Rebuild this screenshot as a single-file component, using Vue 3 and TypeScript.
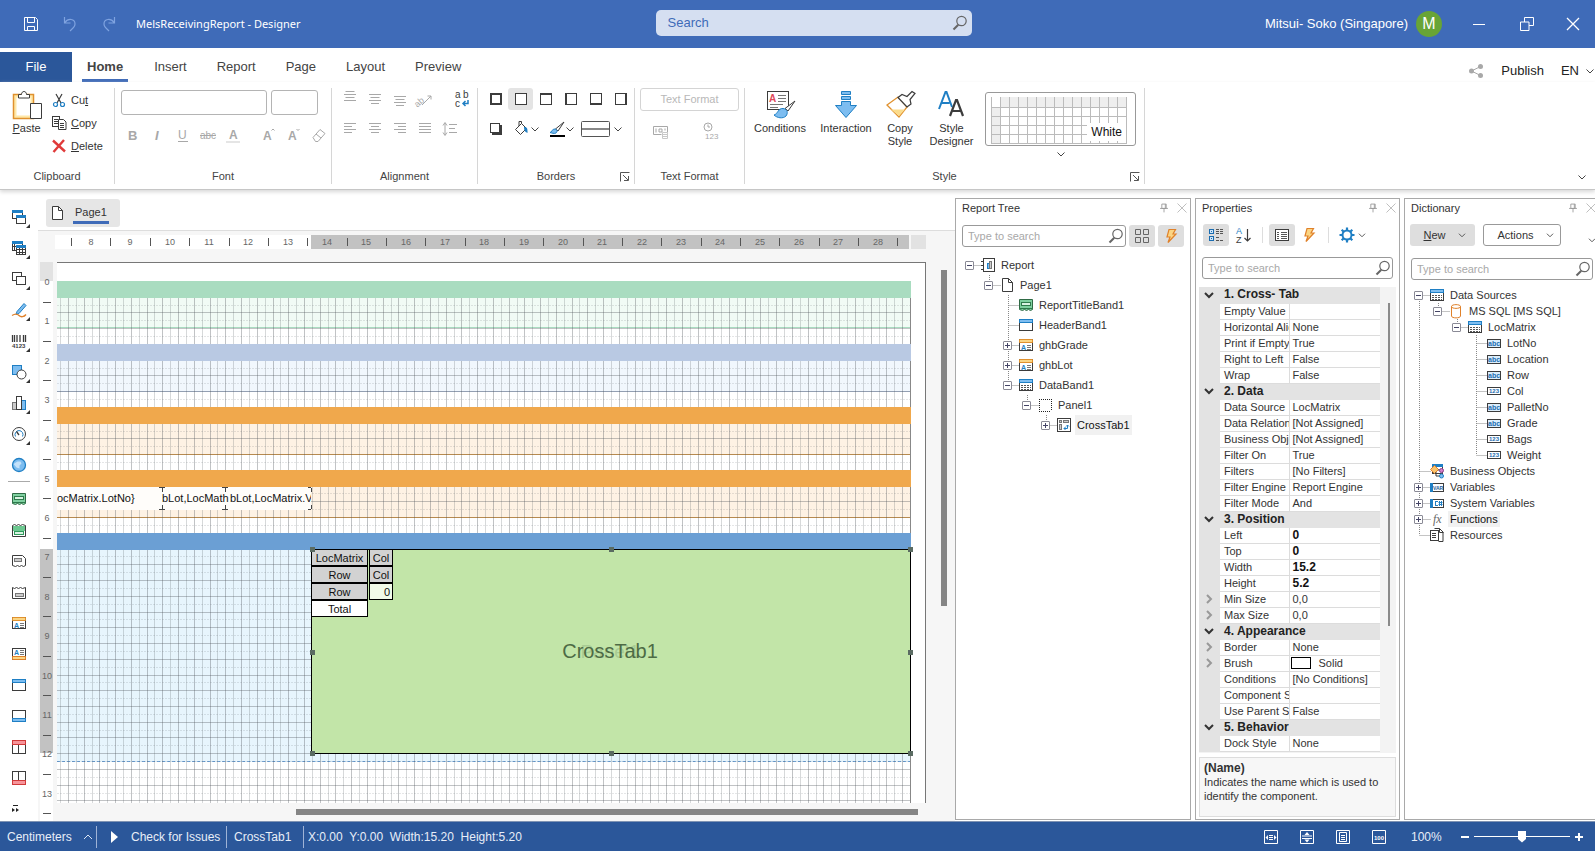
<script setup lang="ts">
interface Row { depth: number; icon: string; label: string; state?: '+' | '-'; active?: boolean }
interface Prop { name: string; value?: string; head?: boolean; bold?: boolean; more?: boolean; swatch?: boolean }

const K = '#3c3c3c'
const B = '#1f7fc4'
const F = '#7dbdf0'
const G = '#a8a8a8'
const box = (x: number, y: number, w: number, h: number, s = K, f = '#fff') =>
  `<rect x="${x + 0.5}" y="${y + 0.5}" width="${w - 1}" height="${h - 1}" fill="${f}" stroke="${s}"/>`
const line = (d: string, s = K, w = 1) => `<path d="${d}" fill="none" stroke="${s}" stroke-width="${w}"/>`
const word = (x: number, y: number, size: number, t: string, c: string, extra = '') =>
  `<text x="${x}" y="${y}" font-size="${size}" fill="${c}" font-family="Liberation Sans, sans-serif" ${extra}>${t}</text>`

const borderBox = (side: string) => box(2, 2, 12, 12, K) + (side ? line(side, K, 2) : '')

const icons: Record<string, string> = {
  save: line('M1.5 1.5h11l2 2v11h-13zM4.5 1.5v5h7v-5M4.5 14.5v-4h7v4', '#fff'),
  undo: line('M2.5 1v6h6M3 6.5C6 2 13 2.5 13 8c0 3-3 5-5 7', '#7fa3e0', 1.2),
  redo: line('M13.5 1v6h-6M13 6.5C10 2 3 2.5 3 8c0 3 3 5 5 7', '#7fa3e0', 1.2),
  search: `<circle cx="9.500" cy="6" r="4.700" fill="none" stroke="#666" stroke-width="1.200"/>` + line('M6.3 9.7L1.500 14.5', '#666', 2),
  chev: line('M4.5 6.5L8 10l3.500-3.500', '#444'),
  chevUp: line('M4 10l4-4 4 4', '#dce6f5'),
  launch: line('M3.5 12.5v-9h9M6 6l5 5M11.5 7v4.500H7', '#555'),
  share: line('M3.5 8l9-4.500M3.500 8l9 4.500', G) + `<circle cx="3.500" cy="8" r="2.500" fill="${G}"/><circle cx="12.500" cy="3.500" r="2.500" fill="${G}"/><circle cx="12.500" cy="12.500" r="2.500" fill="${G}"/>`,
  min: line('M2 8.5h12', '#fff'),
  restore: line('M5.5 6V1.500h9v8H10M1.500 6h8.500v8.500H1.500z', '#fff'),
  close: line('M2 2l12 12M14 2L2 14', '#fff', 1.3),
  closeSmall: line('M2 2l12 12M14 2L2 14', '#aaa'),
  pin: line('M5.5 3.5h5v5h-5zM3.500 8.500h9M8 8.500v4.500M9.500 3.500v5', '#999'),
  cut: line('M5 2l5 9M11 2l-5 9', K, 1.2) + `<circle cx="4.500" cy="12.500" r="2" fill="none" stroke="${B}" stroke-width="1.200"/><circle cx="11.500" cy="12.500" r="2" fill="none" stroke="${B}" stroke-width="1.200"/>`,
  copy: box(1, 1, 8, 11) + line('M3 4.500h4M3 6.500h4M3 8.500h4') + `<path d="M7.500 4.500h5l2.500 2.500v7.500H7.500z" fill="#fff" stroke="${K}"/>` + line('M9 8.500h4M9 10.500h4M9 12.500h4'),
  del: line('M2 2.500l12 11M13 2L2.500 14', '#e03a3a', 2.4),
  bold: word(3, 13, 13, 'B', G, 'font-weight="bold"'),
  italic: word(5, 13, 13, 'I', G, 'font-style="italic" font-weight="bold"'),
  under: word(3, 12, 12, 'U', G) + line('M3 14.500h10', G),
  strike: word(0, 12, 10, 'abc', G) + line('M0 8.500h16', G),
  colorA: word(4, 12, 12, 'A', G, 'font-weight="bold"') + line('M1 15h14', '#ddd', 1.5),
  grow: word(2, 13, 12, 'A', G, 'font-weight="bold"') + line('M10.500 3.500l1.500-1.500 1.500 1.500', G),
  shrink: word(2, 13, 12, 'A', G, 'font-weight="bold"') + line('M10.500 2l1.500 1.500L13.500 2', G),
  eraser: line('M2 10.500l7-8 5 4-7 8H4.500zM5 7l5 4', G),
  vTop: line('M3.500 .5h9M2 3.500h12M3.500 6.500h9M2 9.500h12', G),
  vMid: line('M2 3.500h12M3.500 6.500h9M2 9.500h12M4 12.500h8', G),
  vBot: line('M2 5.500h12M3.500 8.500h9M2 11.500h12M4 14.500h8', G),
  angle: word(-4, 11, 9, 'ab', G, 'transform="rotate(-40 6 8)"') + line('M5 14l9-9M10.500 5H14v3.500', G),
  wrap: word(1, 7, 10, 'a', K) + word(9, 7, 10, 'b', K) + word(1, 16, 10, 'c', K) + line('M14 9v3.500H9M11.500 10L9 12.500l2.500 2.500', B, 1.5),
  aLeft: line('M2 2.500h12M2 5.500h8M2 8.500h12M2 11.500h8', G),
  aCenter: line('M2 2.500h12M4 5.500h8M2 8.500h12M4 11.500h8', G),
  aRight: line('M2 2.500h12M6 5.500h8M2 8.500h12M6 11.500h8', G),
  aFull: line('M2 2.500h12M2 5.500h12M2 8.500h12M2 11.500h12', G),
  spacing: line('M7 3.500h8M7 7.500h6M7 11.500h8M3 2v12M1 4.500l2-3 2 3M1 11.500l2 3 2-3', G),
  bAll: line('M3 3h10v10H3z', K, 2),
  bNone: borderBox(''),
  bTop: borderBox('M2 3h12'),
  bLeft: borderBox('M3 2v12'),
  bBottom: borderBox('M2 13h12'),
  bRight: borderBox('M13 2v12'),
  shadow: `<path d="M4 4h10v10H4z" fill="${K}"/>` + box(2, 2, 10, 10),
  bucket: `<path d="M1.500 8.500l6-6 5 5-6 6z" fill="#fff" stroke="${K}"/>` + line('M7.500 2.500V0.500H5V5', K) + `<path d="M10 6c3.500 0 3.500 2 3.500 6-3-1-3.500-3-3.500-6z" fill="${B}"/>`,
  brush: `<path d="M15 1l-6 9-2.500-2z" fill="#fff" stroke="${K}"/><path d="M1 11.500c2 0 2-4 5-3.500 2.500.5 2.500 3 1 4-2 1-4 0-6-.5z" fill="${F}" stroke="${B}"/>` + line('M1 15h15', '#000', 2),
  lines: `<rect x=".5" y=".5" width="28" height="15" rx="1" fill="#fff" stroke="#555"/>` + line('M1 8h27', '#888', 2),
  money: line('M.5 3.500h14v6M.500 3.500v8h8M3 5.500v4M12 5.500v2M6 6h3v3H6z', G) + line('M9.500 9.500h5v6h-5zM9.500 11.500h5M9.500 13.500h5', '#c8c8c8'),
  clock: `<circle cx="5" cy="4" r="4" fill="none" stroke="${G}"/>` + line('M5 1.500v2.500h2', G) + word(2, 16, 8, '123', G),
  paste: `<path d="M1.500 4.500h20v24h-20z" fill="#ffe8a8" stroke="#e0912e" stroke-width="1.500"/><path d="M4.500 7.500h14v18h-14z" fill="#fff"/><path d="M6.500 8v-3.500h3c0-4 5-4 5 0h3V8z" fill="#fff" stroke="${K}"/><path d="M18.500 13.500h11v15h-11z" fill="#fff" stroke="${K}"/>`,
  conditions: box(2, 1, 22, 19) + word(4, 12, 10, 'A', '#e0485a', 'font-weight="bold"') + line('M13 5.500h8M13 8.500h8M13 11.500h8M5 14.500h13M5 17.500h8', '#777') + `<path d="M30 11l-7 10-3-2.500z" fill="#fff" stroke="${K}"/><path d="M9 25c4-1 4-7 9-6.500 5 .5 5 5 3 7.500-3 3-9 2-12-1z" fill="${F}" stroke="${B}"/>`,
  interaction: `<path d="M10.500 1.500h9v3h-9zM10.500 6.500h9v3h-9zM10.500 11.500h9v4h6L15 27.500 4.500 15.500h6z" fill="${F}" stroke="${B}"/>`,
  copyStyle: `<path d="M2 15L13 7l9 10-8 10z" fill="#fff" stroke="#e0912e" stroke-width="1.300"/><path d="M6 19.500h14l-6 6.500z" fill="#fbdc8c"/><path d="M13 7.500l4-3 5 2 5-5 3 2-5 6 1 4.500-4 3z" fill="#fff" stroke="${K}" stroke-width="1.200"/>`,
  styleDesigner: line('M2 19L8.500 2h1L15 17M4.500 13h8', B, 2) + line('M13 26l6-16h1l6 16M15 21h9', K, 2.2),
  winDup: box(1, 1, 11, 9, K) + line('M1 2.500h11', B, 3) + box(5, 6, 10, 9, K) + line('M5 7.500h10', B, 3),
  gridDup: box(1, 1, 11, 10, K) + line('M1 2.500h11', B, 3) + line('M1 6.500h5M3.500 4v7') + box(5, 5, 10, 10, K) + line('M5 6.500h10', B, 3) + line('M5 9.500h10M5 12.500h10M8.500 8v7M11.500 8v7'),
  boxDup: box(1, 1, 10, 9) + box(5, 5, 10, 9),
  pen: `<path d="M13 1.500l2 2-7 8-3 1 1-3z" fill="${F}" stroke="${B}"/>` + line('M1 13.500c3-2 5-2 7 0s5 1.500 7-1', '#e0812a', 1.3),
  barcode: line('M1.500 2v7M3.500 2v7M6 2v7M9 2v7M12.500 2v7M14.500 2v7', K, 1.3) + word(1, 15, 6, '4123', K, 'font-weight="bold"'),
  shapes: box(1, 1, 10, 10, B, F) + `<circle cx="10.500" cy="10.500" r="4.500" fill="#fff" stroke="${K}"/>`,
  chart: box(1, 7, 5, 8, '#777', '#ccc') + box(10, 5, 5, 10, B, F) + box(5, 1, 6, 14),
  gauge: `<circle cx="8" cy="8" r="6.500" fill="#fff" stroke="${K}"/><path d="M4.500 10.500a4 4 0 1 1 7 0" fill="none" stroke="${B}"/>` + line('M8 9L5.500 5.500', K, 1.3),
  map: `<circle cx="8" cy="8" r="6.500" fill="${F}" stroke="${B}" stroke-width="1.300"/><path d="M2.500 7l4-2.500 3 0 1 2-2 2v3l-3-1z" fill="#c4e2fa"/>`,
  titleBand: `<path d="M1.500 2.500h13v10l-2 1-2-1-2 1-2-1-2 1-3-1z" fill="#7fd0a0" stroke="#2f6a45"/>` + box(3, 5, 10, 4, '#2f7a4c', '#d8f3e2') + line('M1 11.500h14', '#2f7a4c'),
  summaryBand: `<path d="M1.500 14.500v-11l2-1 2 1 2-1 2 1 2-1 3 1v11z" fill="#fff" stroke="${K}"/><path d="M2 4h12v5H2z" fill="#6cc890"/>` + box(3, 9, 10, 4, '#2f9a5c', '#d8f3e2'),
  pageHead: `<path d="M1.500 2.500h10l3 3v7l-2 1-2-1-2 1-2-1-2 1-3-1z" fill="#fff" stroke="${K}"/>` + box(3, 5, 8, 4, '#777', '#ccc'),
  pageFoot: `<path d="M1.500 14.500v-11l2 1 2-1 2 1 2-1 2 1 3-1v11z" fill="#fff" stroke="${K}"/>` + box(4, 9, 9, 4, '#777', '#ccc'),
  group: box(1, 2, 14, 12) + `<path d="M1.500 2.500h13v3h-13z" fill="#fbd583" stroke="#e0912e"/>` + word(3, 13, 7, 'A', B, 'font-weight="bold"') + line('M9 8.500h4M9 10.500h4M9 12.500h4', '#777'),
  groupFoot: box(1, 2, 14, 12) + `<path d="M1.500 10.500h13v3h-13z" fill="#fbd583" stroke="#e0812a"/>` + word(3, 9, 7, 'A', B, 'font-weight="bold"') + line('M9 4.500h4M9 6.500h4M9 8.500h4', '#777'),
  header: box(1, 2, 14, 12) + box(1, 2, 14, 4, B, F),
  footer: box(1, 2, 14, 12) + box(1, 10, 14, 4, B, F),
  colHead: box(1, 2, 14, 13) + line('M7.500 6v8') + box(1, 1, 14, 5, '#d03a3a', '#f7949a'),
  colFoot: box(1, 1, 14, 13) + line('M7.500 2v8') + box(1, 10, 14, 5, '#d03a3a', '#f7949a'),
  data: box(1, 2, 14, 12) + box(1, 2, 14, 4, B, F) + `<path d="M3 8.500h10M3 10.500h10M3 12.500h10" stroke="#555" stroke-dasharray="2 1"/>`,
  more: line('M1 .5h5', '#222') + `<path d="M0 3l3 2-3 2zM4 3l3 2-3 2z" fill="#222"/>`,
  page: `<path d="M3.500 1.500h6l4 4v9h-10z" fill="#fff" stroke="${K}"/>` + line('M9.500 1.500v4h4'),
  report: box(3, 1, 12, 14) + box(7, 6, 3, 6, B, F) + box(9, 4, 3, 8, '#777', '#ccc') + line('M1 4.500h3M1 8.500h3M1 12.500h3'),
  panel: `<path d="M2 2.500h12M2 14.500h12M2.500 2v12M14.500 2v12" fill="none" stroke="#222" stroke-dasharray="1 1"/>`,
  cross: box(1, 1, 14, 14) + box(3, 3, 3, 3, '#777', '#ccc') + box(7, 3, 6, 3, '#777', '#ccc') + box(3, 7, 3, 6, '#777', '#ccc') + line('M8 11.500h3.500V8M9.500 10l-1.500 1.500 1.500 1.500M10 9.500L11.500 8l1.500 1.500', B),
  db: `<path d="M3.500 3.500c0-2.500 9-2.500 9 0v9.500c0 2.500-9 2.500-9 0z" fill="#fff" stroke="#e0812a"/>` + line('M3.500 3.500c0 2.500 9 2.500 9 0', '#e0812a'),
  abc: box(1, 4, 14, 9, K, '#dceefb') + word(2, 11, 7, 'abc', '#1a6cb0', 'font-weight="bold"'),
  num: box(1, 4, 14, 8, K) + word(3, 10, 6, '123', '#1a6cb0', 'font-weight="bold"'),
  business: box(3, 1, 11, 10) + line('M3 2.500h11', B, 3) + `<path d="M5.500 2.500l4 4-4 4-4-4z" fill="#fbc46c" stroke="#e0812a"/>` + line('M7 9v4h5M9 7h3') + `<circle cx="12.500" cy="7.500" r="2" fill="#d27fc8" stroke="#8a3f8a"/><circle cx="12.500" cy="13" r="2" fill="${F}" stroke="${B}"/>`,
  vars: box(1, 4, 14, 9) + `<path d="M1 4h3v9H1z" fill="${B}"/>` + word(4, 11, 5, 'VAR', '#1a5c98', 'font-weight="bold"'),
  sys: box(1, 4, 14, 9) + `<path d="M1 4h3v9H1z" fill="${B}"/>` + line('M6 6.500h3M6 10.500h3M6.500 6v5M10.500 6v5M12.500 6v5M9.500 7.500h4M9.500 9.500h4', B),
  fx: `<text x="4" y="12" font-size="12" font-style="italic" fill="#666" font-family="Liberation Serif, serif">fx</text>`,
  resources: box(1, 3, 9, 11) + line('M3 6.500h4M3 8.500h4M3 10.500h4') + `<path d="M5.500 1.500h5l3.500 3.500v9.500H9.500" fill="none" stroke="${K}"/>` + line('M10.500 1.500v4h4'),
  tiles: line('M1.500 1.500h5v5h-5zM9.500 1.500h5v5h-5zM1.500 9.500h5v5h-5zM9.500 9.500h5v5h-5z', '#666'),
  bolt: `<path d="M6 1.500h6.500L10 6h3L5 14.500 7 9H4z" fill="#fbd583" stroke="#e0812a" stroke-width="1.200"/>`,
  categ: box(1, 2, 5, 5, '#1a6cb0', '#cfe6f9') + box(1, 9, 5, 5, '#1a6cb0', '#cfe6f9') + line('M3 4.500h1M3 11.500h1', '#1a6cb0') + line('M8 2.500h3M12 2.500h3M8 4.500h3M12 4.500h3M8 6.500h3M12 6.500h3M8 10.500h3M8 13.500h3M12 13.500h3', '#555'),
  az: word(1, 7, 9, 'A', B) + word(1, 16, 9, 'Z', K) + line('M12.500 2v12M9.500 11l3 3 3-3', K, 1.2),
  list: box(1, 2, 14, 12) + line('M3 5.500h2M3 7.500h2M3 9.500h2M3 11.500h2M7 5.500h6M7 7.500h6M7 9.500h6M7 11.500h6', '#555'),
  gear: `<circle cx="8" cy="8" r="4.500" fill="none" stroke="${B}" stroke-width="2"/>` + line('M8 .5v3M8 12.500v3M.5 8h3M12.500 8h3M2.700 2.700l2 2M11.300 11.300l2 2M13.300 2.700l-2 2M4.700 11.300l-2 2', B, 2.2),
  fitW: line('M1.500 1.500h13v13h-13zM6 6.500h4M6 8.500h4M6 10.500h4', '#fff') + `<path d="M5 6v5L2.500 8.500zM11 6v5l2.500-2.500z" fill="#fff"/>`,
  fitH: line('M1.500 1.500h13v13h-13zM3 7h10M3 9.500h10', '#fff') + `<path d="M5.500 6L8 3l2.500 3zM5.500 10.500L8 13.500l2.500-3z" fill="#fff"/>`,
  fitPage: line('M1.500 1.500h13v13h-13zM4.500 3.500h7v9h-7zM6 6.500h4M6 8.500h4M6 10.500h4', '#fff'),
  fit100: line('M1.500 1.500h13v13h-13z', '#fff') + word(3, 11, 6, '100', '#fff', 'font-weight="bold"'),
}

const tabs = ['Insert', 'Report', 'Page', 'Layout', 'Preview']
const clip = [{ i: 'cut', a: '', t: 'Cu', z: 't' }, { i: 'copy', a: 'C', t: 'opy', z: '' }, { i: 'del', a: 'D', t: 'elete', z: '' }]
const fontTools = ['bold', 'italic', 'under', 'strike', 'colorA', '', 'grow', 'shrink', 'eraser']
const alignTop = ['vTop', 'vMid', 'vBot', 'angle', 'wrap']
const alignBottom = ['aLeft', 'aCenter', 'aRight', 'aFull', 'spacing']
const borders = ['bAll', 'bNone', 'bTop', 'bLeft', 'bBottom', 'bRight']
const toolsTop = ['winDup', 'gridDup', 'boxDup', 'pen', 'barcode', 'shapes', 'chart', 'gauge', 'map']
const toolsBottom = ['titleBand', 'summaryBand', 'pageHead', 'pageFoot', 'group', 'groupFoot', 'header', 'footer', 'colHead', 'colFoot']

const reportTree: Row[] = [
  { depth: 0, icon: 'report', label: 'Report', state: '-' },
  { depth: 1, icon: 'page', label: 'Page1', state: '-' },
  { depth: 2, icon: 'titleBand', label: 'ReportTitleBand1' },
  { depth: 2, icon: 'header', label: 'HeaderBand1' },
  { depth: 2, icon: 'group', label: 'ghbGrade', state: '+' },
  { depth: 2, icon: 'group', label: 'ghbLot', state: '+' },
  { depth: 2, icon: 'data', label: 'DataBand1', state: '-' },
  { depth: 3, icon: 'panel', label: 'Panel1', state: '-' },
  { depth: 4, icon: 'cross', label: 'CrossTab1', state: '+', active: true },
]
const dictTree: Row[] = [
  { depth: 0, icon: 'data', label: 'Data Sources', state: '-' },
  { depth: 1, icon: 'db', label: 'MS SQL [MS SQL]', state: '-' },
  { depth: 2, icon: 'data', label: 'LocMatrix', state: '-' },
  { depth: 3, icon: 'abc', label: 'LotNo' },
  { depth: 3, icon: 'abc', label: 'Location' },
  { depth: 3, icon: 'abc', label: 'Row' },
  { depth: 3, icon: 'num', label: 'Col' },
  { depth: 3, icon: 'abc', label: 'PalletNo' },
  { depth: 3, icon: 'abc', label: 'Grade' },
  { depth: 3, icon: 'num', label: 'Bags' },
  { depth: 3, icon: 'num', label: 'Weight' },
  { depth: 0, icon: 'business', label: 'Business Objects' },
  { depth: 0, icon: 'vars', label: 'Variables', state: '+' },
  { depth: 0, icon: 'sys', label: 'System Variables', state: '+' },
  { depth: 0, icon: 'fx', label: 'Functions', state: '+', active: true },
  { depth: 0, icon: 'resources', label: 'Resources' },
]
const INDENT = 19
function hasNext(rows: Row[], i: number, level: number): boolean {
  for (let j = i + 1; j < rows.length; j++) {
    if (rows[j].depth < level) return false
    if (rows[j].depth === level) return true
  }
  return false
}
// Dotted connector lines that run behind a tree row
function guides(rows: Row[], i: number, h: number): string {
  const d = rows[i].depth
  const mid = h / 2
  const x = (l: number) => l * INDENT + 14.5
  let p = `M${x(d)} ${mid + 0.5}h12`
  if (i > 0) p += `M${x(d)} 0V${mid}`
  for (let l = 0; l <= d; l++) if (hasNext(rows, i, l)) p += `M${x(l)} ${l === d ? mid : 0}V${h}`
  return p
}

const props: Prop[] = [
  { name: '1. Cross- Tab', head: true }, { name: 'Empty Value' }, { name: 'Horizontal Alignment', value: 'None' },
  { name: 'Print if Empty', value: 'True' }, { name: 'Right to Left', value: 'False' }, { name: 'Wrap', value: 'False' },
  { name: '2. Data', head: true }, { name: 'Data Source', value: 'LocMatrix' }, { name: 'Data Relation', value: '[Not Assigned]' },
  { name: 'Business Object', value: '[Not Assigned]' }, { name: 'Filter On', value: 'True' }, { name: 'Filters', value: '[No Filters]' },
  { name: 'Filter Engine', value: 'Report Engine' }, { name: 'Filter Mode', value: 'And' },
  { name: '3. Position', head: true }, { name: 'Left', value: '0', bold: true }, { name: 'Top', value: '0', bold: true },
  { name: 'Width', value: '15.2', bold: true }, { name: 'Height', value: '5.2', bold: true },
  { name: 'Min Size', value: '0,0', more: true }, { name: 'Max Size', value: '0,0', more: true },
  { name: '4. Appearance', head: true }, { name: 'Border', value: 'None', more: true }, { name: 'Brush', value: 'Solid', more: true, swatch: true },
  { name: 'Conditions', value: '[No Conditions]' }, { name: 'Component Style', value: '' }, { name: 'Use Parent Styles', value: 'False' },
  { name: '5. Behavior', head: true }, { name: 'Dock Style', value: 'None' },
]

// Canvas geometry: one centimetre on screen, and the first visible offset
const CM = 39.35
const hx = (n: number) => Math.round(n * CM - 279)
const vy = (n: number) => Math.round(n * CM + 20)
const hNums = Array.from({ length: 21 }, (_, i) => i + 8)
const vNums = Array.from({ length: 14 }, (_, i) => i)
const RIGHT = 853
const vLines = Array.from({ length: 109 }, (_, i) => ({ x: Math.round(RIGHT - i * CM / 5) + 0.5, strong: i % 2 === 1 }))
const hLines = Array.from({ length: 67 }, (_, i) => ({ y: Math.round(18 + i * CM / 5) + 0.5, strong: i % 2 === 0 }))
const bands = [
  { top: 18, height: 47, name: 'title' }, { top: 81, height: 48, name: 'head' },
  { top: 144, height: 48, name: 'grp' }, { top: 207, height: 48, name: 'grp' }, { top: 270, height: 229, name: 'dat' },
]
const cells = [['LocMatrix', 'Col'], ['Row', 'Col'], ['Row', '0'], ['Total', '']]
</script>

<template>
  <div class="app">
    <header class="title">
      <button class="tb" aria-label="Save"><svg width="16" height="16" viewBox="0 0 16 16" v-html="icons.save" /></button>
      <button class="tb" aria-label="Undo"><svg width="16" height="16" viewBox="0 0 16 16" v-html="icons.undo" /></button>
      <button class="tb" aria-label="Redo"><svg width="16" height="16" viewBox="0 0 16 16" v-html="icons.redo" /></button>
      <h1>MelsReceivingReport - Designer</h1>
      <label class="gsearch"><input type="text" placeholder="Search" aria-label="Search" /><svg width="16" height="16" viewBox="0 0 16 16" v-html="icons.search" /></label>
      <div class="user"><span>Mitsui- Soko (Singapore)</span><span class="avatar">M</span></div>
      <button class="win" aria-label="Minimize"><svg width="16" height="16" viewBox="0 0 16 16" v-html="icons.min" /></button>
      <button class="win" aria-label="Restore"><svg width="16" height="16" viewBox="0 0 16 16" v-html="icons.restore" /></button>
      <button class="win" aria-label="Close"><svg width="16" height="16" viewBox="0 0 16 16" v-html="icons.close" /></button>
    </header>

    <nav class="tabs">
      <button class="file">File</button>
      <button class="tab on">Home</button>
      <button v-for="t in tabs" :key="t" class="tab">{{ t }}</button>
      <div class="right">
        <svg width="16" height="16" viewBox="0 0 16 16" v-html="icons.share" />
        <button>Publish</button>
        <button class="lang">EN <svg width="16" height="16" viewBox="0 0 16 16" v-html="icons.chev" /></button>
      </div>
    </nav>

    <section class="ribbon">
      <div class="group g-clip">
        <div class="body">
          <button class="big paste"><svg width="30" height="30" viewBox="0 0 30 30" v-html="icons.paste" /><span><u>P</u>aste</span></button>
          <div class="stack">
            <button v-for="c in clip" :key="c.i"><svg width="16" height="16" viewBox="0 0 16 16" v-html="icons[c.i]" /><span><u>{{ c.a }}</u>{{ c.t }}<u>{{ c.z }}</u></span></button>
          </div>
        </div>
        <footer>Clipboard</footer>
      </div>
      <div class="group g-font">
        <div class="body col">
          <div class="combos"><select class="fam" aria-label="Font family"></select><select class="size" aria-label="Font size"></select></div>
          <div class="line fonts"><template v-for="(f, i) in fontTools" :key="i"><button v-if="f" :aria-label="f"><svg width="16" height="16" viewBox="0 0 16 16" v-html="icons[f]" /></button><i v-else /></template></div>
        </div>
        <footer>Font</footer>
      </div>
      <div class="group g-align">
        <div class="body col">
          <div class="line"><button v-for="f in alignTop" :key="f" :class="f" :aria-label="f"><svg width="16" height="16" viewBox="0 0 16 16" v-html="icons[f]" /></button></div>
          <div class="line second"><button v-for="f in alignBottom" :key="f" :class="f" :aria-label="f"><svg width="16" height="16" viewBox="0 0 16 16" v-html="icons[f]" /></button></div>
        </div>
        <footer>Alignment</footer>
      </div>
      <div class="group g-border">
        <div class="body col">
          <div class="line"><button v-for="f in borders" :key="f" :class="{ sel: f === 'bNone' }" :aria-label="f"><svg width="16" height="16" viewBox="0 0 16 16" v-html="icons[f]" /></button></div>
          <div class="line second">
            <button aria-label="Shadow"><svg width="16" height="16" viewBox="0 0 16 16" v-html="icons.shadow" /></button>
            <button class="drop" aria-label="Fill"><svg width="16" height="16" viewBox="0 0 16 16" v-html="icons.bucket" /><svg class="c" width="16" height="16" viewBox="0 0 16 16" v-html="icons.chev" /></button>
            <button class="drop" aria-label="Line colour"><svg width="16" height="16" viewBox="0 0 16 16" v-html="icons.brush" /><svg class="c" width="16" height="16" viewBox="0 0 16 16" v-html="icons.chev" /></button>
            <button class="drop wide" aria-label="Line style"><svg width="29" height="16" viewBox="0 0 29 16" v-html="icons.lines" /><svg class="c" width="16" height="16" viewBox="0 0 16 16" v-html="icons.chev" /></button>
          </div>
        </div>
        <footer>Borders<button class="launch" aria-label="Border settings"><svg width="16" height="16" viewBox="0 0 16 16" v-html="icons.launch" /></button></footer>
      </div>
      <div class="group g-text">
        <div class="body col">
          <button class="fmt">Text Format</button>
          <div class="line fmts"><button aria-label="Currency"><svg width="16" height="16" viewBox="0 0 16 16" v-html="icons.money" /></button><button aria-label="Time"><svg width="16" height="16" viewBox="0 0 16 16" v-html="icons.clock" /></button></div>
        </div>
        <footer>Text Format</footer>
      </div>
      <div class="group g-style">
        <div class="body">
          <button class="big b1"><svg width="30" height="30" viewBox="0 0 30 30" v-html="icons.conditions" /><span>Conditions</span></button>
          <button class="big b2"><svg width="30" height="30" viewBox="0 0 30 30" v-html="icons.interaction" /><span>Interaction</span></button>
          <button class="big b3"><svg width="30" height="30" viewBox="0 0 30 30" v-html="icons.copyStyle" /><span>Copy<br />Style</span></button>
          <button class="big b4"><svg width="30" height="30" viewBox="0 0 30 30" v-html="icons.styleDesigner" /><span>Style<br />Designer</span></button>
          <div class="gallery"><button class="swatch"><span>White</span></button><svg width="16" height="16" viewBox="0 0 16 16" v-html="icons.chev" /></div>
        </div>
        <footer>Style<button class="launch" aria-label="Style settings"><svg width="16" height="16" viewBox="0 0 16 16" v-html="icons.launch" /></button></footer>
      </div>
      <button class="collapse" aria-label="Collapse ribbon"><svg width="16" height="16" viewBox="0 0 16 16" v-html="icons.chev" /></button>
    </section>

    <main>
      <aside class="tools">
        <button v-for="t in toolsTop" :key="t" :class="{ more: t !== 'map' }" :aria-label="t"><svg width="16" height="16" viewBox="0 0 16 16" v-html="icons[t]" /></button>
        <hr />
        <button v-for="t in toolsBottom" :key="t" :aria-label="t"><svg width="16" height="16" viewBox="0 0 16 16" v-html="icons[t]" /></button>
        <button class="rest" aria-label="More tools"><svg width="8" height="8" viewBox="0 0 8 8" v-html="icons.more" /></button>
      </aside>

      <section class="designer">
        <div class="pages"><button><svg width="16" height="16" viewBox="0 0 16 16" v-html="icons.page" /><span>Page1</span></button></div>
        <div class="surface">
          <svg class="hruler">
            <rect x="256" y="0" width="598" height="14" class="r-sel" /><rect x="856" y="0" width="15" height="14" class="r-end" />
            <g v-for="n in hNums" :key="n"><text :x="hx(n)" y="10">{{ n }}</text><path :d="`M${hx(n - 0.5) + 0.5} 3v8`" /></g>
            <path :d="`M${hx(28.5) + 0.5} 3v8`" />
          </svg>
          <svg class="vruler">
            <rect x="0" y="0" width="13" height="19" class="r-end" /><rect x="0" y="287" width="13" height="204" class="r-sel" />
            <g v-for="n in vNums" :key="n"><text x="7" :y="vy(n) + 3">{{ n }}</text><path :d="`M3 ${vy(n + 0.5) + 0.5}h8`" /></g>
          </svg>
          <div class="view">
            <div class="sheet">
              <div v-for="(b, i) in bands" :key="i" class="band" :class="b.name" :style="{ top: b.top + 'px', height: b.height + 'px' }" />
              <svg class="grid">
                <path v-for="l in vLines" :key="'v' + l.x" :d="`M${l.x} 18V541`" :class="{ strong: l.strong }" />
                <path v-for="l in hLines" :key="'h' + l.y" :d="`M0 ${l.y}H${RIGHT}`" :class="l.strong ? 'strong' : 'weak'" />
                <path :d="`M${RIGHT + 0.5} 18V541`" class="edge" />
              </svg>
              <div v-for="(b, i) in bands" :key="'h' + i" class="bar" :class="b.name" :style="{ top: b.top + 'px' }" />
              <div class="fields"><span>ocMatrix.LotNo}</span><span>bLot,LocMath</span><span>bLot,LocMatrix.V</span></div>
              <svg class="marks"><path d="M102 .5h6M105.500 1v4M102 22.500h6M105.500 18v4M165 .5h6M168.500 1v4M165 22.500h6M168.500 18v4M251 .5h3M254.500 1v4M251 22.500h3M254.500 18v4" /></svg>
              <div class="cross">
                <span class="ghost">Panel1</span><span class="name">CrossTab1</span>
                <table><tbody><tr v-for="(r, i) in cells" :key="i"><td>{{ r[0] }}</td><td>{{ r[1] }}</td></tr></tbody></table>
                <b v-for="h in 8" :key="h" :class="'h h' + h" />
              </div>
            </div>
          </div>
          <div class="vbar"><i /></div>
          <div class="hbar"><i /></div>
        </div>
      </section>

      <aside class="panel tree-panel">
        <h2>Report Tree<span><svg width="14" height="14" viewBox="0 0 16 16" v-html="icons.pin" /><svg width="12" height="12" viewBox="0 0 16 16" v-html="icons.closeSmall" /></span></h2>
        <div class="find">
          <label><input type="text" placeholder="Type to search" aria-label="Search report tree" /><svg width="16" height="16" viewBox="0 0 16 16" v-html="icons.search" /></label>
          <button class="sq" aria-label="Components"><svg width="16" height="16" viewBox="0 0 16 16" v-html="icons.tiles" /></button>
          <button class="sq" aria-label="Events"><svg width="16" height="16" viewBox="0 0 16 16" v-html="icons.bolt" /></button>
        </div>
        <ul class="tree tall">
          <li v-for="(r, i) in reportTree" :key="i" :style="{ paddingLeft: r.depth * INDENT + 9 + 'px' }">
            <svg class="guide"><path :d="guides(reportTree, i, 20)" /></svg>
            <button v-if="r.state" class="exp" :class="{ plus: r.state === '+' }" :aria-label="r.label" /><i v-else class="exp none" />
            <svg class="ico" width="16" height="16" viewBox="0 0 16 16" v-html="icons[r.icon]" /><span :class="{ active: r.active }">{{ r.label }}</span>
          </li>
        </ul>
      </aside>

      <aside class="panel prop-panel">
        <h2>Properties<span><svg width="14" height="14" viewBox="0 0 16 16" v-html="icons.pin" /><svg width="12" height="12" viewBox="0 0 16 16" v-html="icons.closeSmall" /></span></h2>
        <div class="ptools">
          <button class="sq" aria-label="Categories"><svg width="16" height="16" viewBox="0 0 16 16" v-html="icons.categ" /></button>
          <button aria-label="Sort"><svg width="16" height="16" viewBox="0 0 16 16" v-html="icons.az" /></button><hr />
          <button class="sq" aria-label="Property list"><svg width="16" height="16" viewBox="0 0 16 16" v-html="icons.list" /></button>
          <button aria-label="Events"><svg width="16" height="16" viewBox="0 0 16 16" v-html="icons.bolt" /></button><hr />
          <button class="gear" aria-label="Settings"><svg width="16" height="16" viewBox="0 0 16 16" v-html="icons.gear" /><svg width="14" height="14" viewBox="0 0 16 16" v-html="icons.chev" /></button>
        </div>
        <div class="find"><label><input type="text" placeholder="Type to search" aria-label="Search properties" /><svg width="16" height="16" viewBox="0 0 16 16" v-html="icons.search" /></label></div>
        <div class="props">
          <table>
            <colgroup><col class="c1" /><col class="c2" /><col /></colgroup>
            <tbody>
              <tr v-for="p in props" :key="p.name">
                <td class="mark"><svg v-if="p.head" width="12" height="12" viewBox="0 0 12 12"><path d="M2 4l4 4 4-4" class="dn" /></svg><svg v-if="p.more" width="12" height="12" viewBox="0 0 12 12"><path d="M4 2l4 4-4 4" class="rt" /></svg></td>
                <th v-if="p.head" colspan="2" scope="colgroup">{{ p.name }}</th>
                <template v-else><td class="n">{{ p.name }}</td><td class="v" :class="{ bold: p.bold }"><i v-if="p.swatch" />{{ p.value }}</td></template>
              </tr>
            </tbody>
          </table>
          <div class="pbar"><i /></div>
        </div>
        <div class="desc"><strong>(Name)</strong><p>Indicates the name which is used to identify the component.</p></div>
      </aside>

      <aside class="panel dict-panel">
        <h2>Dictionary<span><svg width="14" height="14" viewBox="0 0 16 16" v-html="icons.pin" /><svg width="12" height="12" viewBox="0 0 16 16" v-html="icons.closeSmall" /></span></h2>
        <div class="dtools">
          <button class="new"><span><u>N</u>ew</span><svg width="14" height="14" viewBox="0 0 16 16" v-html="icons.chev" /></button>
          <button class="act"><span>Actions</span><svg width="14" height="14" viewBox="0 0 16 16" v-html="icons.chev" /></button>
          <svg class="ov" width="14" height="14" viewBox="0 0 16 16" v-html="icons.chev" />
        </div>
        <div class="find"><label><input type="text" placeholder="Type to search" aria-label="Search dictionary" /><svg width="16" height="16" viewBox="0 0 16 16" v-html="icons.search" /></label></div>
        <ul class="tree">
          <li v-for="(r, i) in dictTree" :key="i" :style="{ paddingLeft: r.depth * INDENT + 9 + 'px' }">
            <svg class="guide"><path :d="guides(dictTree, i, 16)" /></svg>
            <button v-if="r.state" class="exp" :class="{ plus: r.state === '+' }" :aria-label="r.label" /><i v-else class="exp none" />
            <svg class="ico" width="16" height="16" viewBox="0 0 16 16" v-html="icons[r.icon]" /><span :class="{ active: r.active }">{{ r.label }}</span>
          </li>
        </ul>
      </aside>
    </main>

    <footer class="status">
      <button class="unit">Centimeters<svg width="16" height="16" viewBox="0 0 16 16" v-html="icons.chevUp" /></button>
      <button class="check"><svg width="8" height="12" viewBox="0 0 8 12"><path d="M0 0l7 6-7 6z" fill="#fff" /></svg>Check for Issues</button>
      <span class="cur">CrossTab1</span>
      <span class="pos">X:0.00&nbsp; Y:0.00&nbsp; Width:15.20&nbsp; Height:5.20</span>
      <div class="zoom">
        <button v-for="f in ['fitW', 'fitH', 'fitPage', 'fit100']" :key="f" :aria-label="f"><svg width="16" height="16" viewBox="0 0 16 16" v-html="icons[f]" /></button>
        <span>100%</span><button class="step" aria-label="Zoom out"><svg width="10" height="10" viewBox="0 0 10 10"><path d="M1 5h8" /></svg></button>
        <input type="range" min="0" max="200" value="100" aria-label="Zoom" />
        <button class="step" aria-label="Zoom in"><svg width="10" height="10" viewBox="0 0 10 10"><path d="M1 5h8M5 1v8" /></svg></button>
      </div>
    </footer>
  </div>
</template>

<style>
body { margin: 0; }
</style>

<style scoped>
* { box-sizing: border-box; }
.app { height: 100vh; display: flex; flex-direction: column; overflow: hidden; background: #fff; color: #333; font: 13px/16px "Liberation Sans", Arial, sans-serif; }
button, input, select { font: inherit; color: inherit; border: 0; padding: 0; margin: 0; background: none; border-radius: 0; }
button { display: flex; align-items: center; justify-content: center; flex: none; }
svg { display: block; flex: none; overflow: visible; }
hr { border: 0; margin: 0; }
i { font-style: normal; }

.title { flex: none; height: 48px; background: #3f6bb8; color: #fff; display: flex; align-items: center; padding-left: 11px; position: relative; }
.tb { width: 39px; height: 32px; }
.title h1 { margin: 0 0 0 8px; font: 11px/16px "Noto Sans", "Open Sans", sans-serif; }
.gsearch { position: absolute; left: 50%; top: 10px; width: 316px; height: 26px; margin-left: -142px; background: #d5dff1; border-radius: 5px; display: flex; align-items: center; padding: 0 4px 0 12px; }
.gsearch input { flex: 1; min-width: 0; outline: 0; }
.gsearch input::placeholder { color: #3f6bb8; opacity: 1; }
.user { margin-left: auto; display: flex; align-items: center; gap: 8px; margin-right: 13px; }
.avatar { width: 26px; height: 26px; border-radius: 50%; background: #68a436; text-align: center; font-size: 16px; line-height: 26px; }
.win { width: 48px; height: 46px; }
.win:last-child { width: 44px; }

.tabs { flex: none; height: 34px; padding-top: 4px; display: flex; color: #444; }
.file { width: 72px; height: 30px; background: #2b579a; color: #fff; }
.tab { height: 30px; margin-left: 22px; padding: 0 4px; border-bottom: 3px solid transparent; border-top: 3px solid transparent; }
.tab.on { margin-left: 10px; padding: 0 5px; font-weight: bold; border-bottom-color: #3f6bb8; }
.right { margin-left: auto; display: flex; align-items: center; gap: 17px; padding-top: 8px; color: #222; }
.lang svg { margin: 0 -3px 0 3px; }

.ribbon { flex: none; height: 108px; padding-top: 6px; display: flex; border-bottom: 1px solid #c6c6c6; box-shadow: 0 2px 4px #d8d8d8; position: relative; z-index: 1; font-size: 11px; line-height: 13px; color: #333; }
.group { height: 96px; border-right: 1px solid #d6d6d6; display: flex; flex-direction: column; flex: none; }
.group > footer { height: 14px; text-align: center; position: relative; color: #444; }
.body { flex: 1; display: flex; }
.body.col { flex-direction: column; }
.g-clip { width: 115px; } .g-font { width: 217px; } .g-align { width: 146px; } .g-border { width: 157px; } .g-text { width: 110px; } .g-style { width: 400px; }
.big { flex-direction: column; justify-content: flex-start; align-self: flex-start; padding-top: 2px; gap: 2px; text-align: center; }
.paste { width: 50px; padding-left: 3px; }
.stack { display: flex; flex-direction: column; gap: 7px; padding: 4px 0 0 1px; }
.stack button { justify-content: flex-start; gap: 4px; }
.combos { display: flex; gap: 4px; padding: 2px 0 0 6px; }
.combos select { appearance: none; height: 25px; border: 1px solid #b4b4b4; border-radius: 3px; }
.fam { width: 146px; } .size { width: 47px; }
.line { display: flex; height: 22px; align-items: center; padding-left: 5px; }
.line button { width: 25px; height: 22px; }
.line.second { margin-top: 8px; }
.fonts { margin-top: 9px; } .fonts i { width: 11px; }
.line .wrap { margin-left: 12px; }
.g-border .sel { background: #e4e4e4; border-radius: 3px; }
.line .drop { width: 35px; } .drop .c { margin: 0 -5px 0 -3px; }
.line .wide { width: 50px; margin-left: -2px; }
.line .wide .c { margin-left: 0; }
.launch { position: absolute; right: 1px; top: -1px; }
.fmt { height: 23px; margin: 0 5px; border: 1px solid #d4d4d4; border-radius: 3px; color: #b8b8b8; }
.fmts { padding: 0 13px; gap: 25px; margin-top: 9px; }
.b1 { width: 70px; } .b2 { width: 62px; } .b3 { width: 46px; } .b4 { width: 57px; }
.gallery { margin: 4px 0 0 5px; display: flex; flex-direction: column; align-items: center; }
.swatch { width: 151px; height: 54px; border: 1px solid #999; border-radius: 3px; align-items: flex-end; justify-content: flex-end; padding: 4px 9px;
  background: repeating-linear-gradient(90deg, #bbb 0 1px, transparent 1px 9px) 5px 4px / 136px 47px, repeating-linear-gradient(#bbb 0 1px, transparent 1px 9px) 5px 14px / 136px 37px, linear-gradient(#eee, #eee) 14px 4px / 127px 10px, linear-gradient(#eee, #eee) 5px 14px / 9px 37px; background-repeat: no-repeat; }
.swatch span { background: #fff; padding: 2px 4px; font-size: 12px; line-height: 14px; color: #111; }
.collapse { margin-left: auto; margin-right: 5px; align-self: flex-end; height: 24px; }

main { flex: 1; min-height: 0; display: flex; padding-top: 8px; }
.tools { width: 38px; flex: none; overflow: hidden; padding-top: 3px; }
.tools button { width: 38px; height: 31px; position: relative; }
.tools button.more::after { content: ""; position: absolute; right: 8px; bottom: 4px; border: 2px solid #333; border-top-color: transparent; border-left-color: transparent; }
.tools hr { height: 1px; margin: 1px 8px; background: #aaa; }
.tools .rest { width: 32px; }

.designer { flex: 1; min-width: 0; display: flex; flex-direction: column; }
.pages { height: 33px; flex: none; border-bottom: 1px solid #ddd; padding-left: 8px; }
.pages button { width: 74px; height: 28px; background: #e6e6e6; border-radius: 3px; gap: 8px; margin-top: 1px; justify-content: flex-start; padding-left: 3px; }
.pages span { padding: 2px 2px 0; border-bottom: 3px solid #3f6bb8; line-height: 17px; font-size: 11px; }
.surface { flex: 1; min-height: 0; background: #f6f6f6; display: grid; grid-template: 31px 1fr 18px / 17px 1fr 28px; overflow: hidden; }
.hruler { grid-area: 1 / 2 / 2 / 4; width: 100%; height: 14px; margin-top: 4px; background: linear-gradient(90deg, #fff 854px, #f6f6f6 854px); overflow: hidden; }
.vruler { grid-area: 2 / 1 / 4 / 2; width: 13px; height: 100%; margin-left: 2px; background: #fff; overflow: hidden; }
.surface text { font: 9px "Liberation Sans", sans-serif; fill: #666; text-anchor: middle; }
.surface path { stroke: #555; }
.r-sel { fill: #c2c2c2; } .r-end { fill: #e2e2e2; }
.view { grid-area: 2 / 2 / 3 / 3; overflow: hidden; padding-left: 2px; }
.sheet { position: relative; height: 100%; width: 869px; background: #fff; border-top: 1px solid #777; border-right: 1px solid #777; overflow: hidden; }
.band, .bar { position: absolute; left: 0; width: 854px; }
.band { border-bottom: 1px solid; } .bar { height: 17px; }
.bar.title { background: #a9dcc0; padding: 0; } .bar.head { background: #b9c9e3; } .bar.grp { background: #f0a84c; } .bar.dat { background: #6b9fd4; }
.band.title { background: #f1fbf5; border-color: #a9dcc0; padding: 0; }
.title.band, .title.bar { display: block; position: absolute; }
.band.head { background: #f1f7fd; border-color: #b9c9e3; }
.band.grp { background: #fef2e4; border-color: #f0a84c; }
.band.dat { background: #e7f5fd; border-bottom: 1px dashed #6b9fd4; }
.grid { position: absolute; left: 0; top: 0; width: 100%; height: 100%; }
.grid path { stroke: #4a505838; } .grid path.strong { stroke: #4a505858; } .grid path.weak { stroke: #4a505824; stroke-dasharray: 2 1; } .grid path.edge { stroke: #888; }
.fields { position: absolute; left: 0; top: 224px; width: 254px; height: 23px; background: #fffdfa; color: #111; font-size: 11px; line-height: 23px; white-space: nowrap; display: grid; grid-template-columns: 105px 68px 81px; }
.fields span { overflow: hidden; }
.marks { position: absolute; left: 0; top: 224px; width: 256px; height: 24px; } .marks path { fill: none; stroke: #444; }
.cross { position: absolute; left: 254px; top: 286px; width: 600px; height: 205px; background: #c2e5a8; border: 1px solid #000; color: #4d6b45; }
.ghost, .name { position: absolute; inset: 0; text-align: center; line-height: 203px; font-size: 20px; padding-right: 2px; }
.ghost { color: #a9cc94; font-size: 19px; }
.cross table { border-collapse: separate; border-spacing: 1px 0; margin-left: -2px; margin-top: -1px; font-size: 11px; line-height: 12px; color: #111; position: relative; }
.cross td { height: 17px; padding: 0; text-align: center; border: 1px solid #000; background: #d2d2d2; }
.cross td:first-child { width: 57px; } .cross td + td { width: 24px; }
.cross tr:nth-child(3) td + td { background: #f2fbe9; text-align: right; padding-right: 2px; }
.cross tr:nth-child(4) td { background: #fff; } .cross tr:nth-child(4) td + td { background: none; border-color: transparent; }
.h { position: absolute; width: 5px; height: 5px; background: #5a6b62; }
.h1 { left: -2px; top: -3px; } .h2 { left: 297px; top: -3px; } .h3 { right: -3px; top: -3px; } .h4 { left: -2px; top: 100px; } .h5 { right: -3px; top: 100px; } .h6 { left: -2px; bottom: -3px; } .h7 { left: 297px; bottom: -3px; } .h8 { right: -3px; bottom: -3px; }
.vbar { grid-area: 2 / 3 / 3 / 4; padding: 8px 0 0 14px; } .vbar i { display: block; width: 6px; height: 336px; background: #858585; }
.hbar { grid-area: 3 / 2 / 4 / 4; padding: 6px 37px 0 241px; } .hbar i { display: block; height: 6px; background: #858585; }

.panel { flex: none; background: #fff; border: 1px solid #a9a9a9; display: flex; flex-direction: column; margin: 0 4px 1px 0; font-size: 11px; line-height: 16px; overflow: hidden; color: #333; }
.tree-panel { width: 236px; } .prop-panel { width: 205px; } .dict-panel { width: 191px; margin-right: 0; border-right: 0; }
.panel h2 { flex: none; height: 18px; margin: 0; padding: 0 2px 0 6px; font: inherit; line-height: 18px; display: flex; justify-content: space-between; }
.panel h2 span { display: flex; gap: 5px; align-items: center; }
.dict-panel h2 { padding-right: 0; margin-right: -2px; }
.find { flex: none; display: flex; gap: 3px; padding: 0 6px; }
.find label { flex: 1; min-width: 0; height: 22px; border: 1px solid #999; border-radius: 3px; display: flex; align-items: center; padding: 0 1px 0 5px; }
.find input { flex: 1; min-width: 0; outline: 0; } .find input::placeholder { color: #a8a8a8; opacity: 1; }
.tree-panel .find { margin-top: 8px; }
.sq { width: 26px; height: 22px; background: #dedede; border-radius: 3px; }
.tree { list-style: none; margin: 8px 0 0; padding: 0; }
.tree li { height: 16px; display: flex; align-items: center; position: relative; }
.tree.tall li { height: 20px; }
.guide { position: absolute; left: 0; top: 0; width: 100%; height: 100%; }
.guide path { fill: none; stroke: #888; stroke-dasharray: 1 1; }
.exp { width: 9px; height: 9px; border: 1px solid #8a8a96; border-radius: 1px; position: relative; margin-right: 6px; background: linear-gradient(#446, #446) 1px 3px / 5px 1px no-repeat, #fff; }
.exp.plus { background: linear-gradient(#446, #446) 1px 3px / 5px 1px no-repeat, linear-gradient(#446, #446) 3px 1px / 1px 5px no-repeat, #fff; }
.exp.none { visibility: hidden; }
.ico { position: relative; margin-right: 3px; }
.tree span { padding: 0 2px; white-space: nowrap; position: relative; } .tree .active { background: #f1f1f1; color: #111; } .tree.tall .active { line-height: 20px; }
.ptools { display: flex; align-items: center; padding-left: 7px; margin-top: 6px; height: 23px; }
.ptools button { height: 22px; width: 26px; } .ptools .sq + button { margin-left: 1px; }
.ptools hr { width: 1px; height: 16px; background: #ddd; margin: 0 6px; } .ptools hr:last-of-type { margin-right: 10px; }
.ptools .gear { width: 30px; } .prop-panel .find { margin-top: 11px; }
.props { flex: 1; min-height: 0; margin: 8px 3px 0; display: flex; background: #f3f3f3; overflow: hidden; }
.props table { width: 181px; table-layout: fixed; border-collapse: collapse; align-self: flex-start; }
.c1 { width: 21px; } .c2 { width: 69px; }
.props td, .props th { height: 16px; padding: 0 0 0 4px; line-height: 15px; white-space: nowrap; overflow: hidden; background: #fff; border-bottom: 1px solid #dcdcdc; text-align: left; }
.props .mark, .props th { background: #e3e3e3; border-bottom-color: #e3e3e3; } .props th { font-size: 12px; font-weight: bold; color: #222; }
.props .mark { padding-left: 4px; } .props .v { border-left: 1px solid #dcdcdc; padding-left: 3px; } .props .bold { font-size: 12px; font-weight: bold; color: #111; }
.v i { display: inline-block; width: 20px; height: 12px; border: 1px solid #000; vertical-align: top; margin: 1px 8px 0 -2px; }
.dn, .rt { fill: none; stroke: #333; stroke-width: 2; } .rt { stroke: #999; }
.pbar { margin: 16px 0 0 8px; } .pbar i { display: block; width: 2px; height: 323px; background: #8a8a8a; }
.desc { flex: none; height: 60px; margin: 4px 3px 2px; border: 1px solid #ddd; background: #f7f7f7; padding: 3px 4px; line-height: 14px; } .desc strong { font-size: 12px; } .desc p { margin: 0; }
.dtools { display: flex; align-items: center; padding-left: 5px; margin-top: 6px; height: 23px; }
.dtools button { height: 22px; border-radius: 3px; } .new { width: 65px; background: #dedede; gap: 9px; padding-left: 7px; } .act { width: 78px; margin-left: 8px; border: 1px solid #999; gap: 9px; padding-left: 10px; }
.dtools .ov { margin: 10px -4px 0 auto; } .dict-panel .find { margin-top: 12px; padding-right: 2px; } .dict-panel .tree { margin-top: 7px; }

.status { flex: none; height: 30px; background: #2b579a; color: #e8eef8; display: flex; align-items: center; font-size: 12px; border-top: 1px solid #7f93b3; }
.unit { height: 22px; padding-left: 7px; width: 97px; justify-content: space-between; border-right: 1px solid #9fb3d6; }
.check { height: 22px; width: 130px; gap: 12px; padding: 0 3px 0 14px; justify-content: flex-start; border-right: 1px solid #9fb3d6; white-space: nowrap; }
.cur { height: 22px; line-height: 22px; width: 77px; padding-left: 7px; border-right: 1px solid #9fb3d6; } .pos { padding-left: 4px; }
.zoom { margin-left: auto; display: flex; align-items: center; padding-right: 10px; } .zoom > button { width: 36px; } .zoom > span { width: 48px; margin-left: 14px; } .zoom .step { width: 12px; } .step path { stroke: #fff; stroke-width: 2; }
.zoom input { appearance: none; width: 96px; height: 16px; margin: 0 3px; background: linear-gradient(#fff, #fff) center / 100% 1px no-repeat; }
.zoom input::-webkit-slider-thumb { appearance: none; width: 8px; height: 12px; background: #fff; clip-path: polygon(0 0, 100% 0, 100% 70%, 50% 100%, 0 70%); }
</style>
